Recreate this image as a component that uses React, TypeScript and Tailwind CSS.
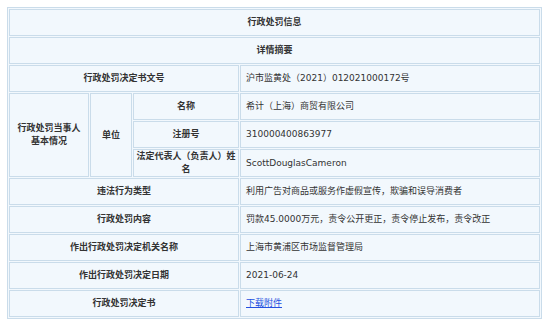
const label =
  "border border-[#cadcea] px-[5px] py-0 text-center font-semibold text-[#333]";
const value = "border border-[#cadcea] px-[5px] py-0 text-left text-[#333]";

const bottomRows: [string, React.ReactNode][] = [
  ["违法行为类型", "利用广告对商品或服务作虚假宣传，欺骗和误导消费者"],
  ["行政处罚内容", "罚款45.0000万元，责令公开更正，责令停止发布，责令改正"],
  ["作出行政处罚决定机关名称", "上海市黄浦区市场监督管理局"],
  ["作出行政处罚决定日期", "2021-06-24"],
  [
    "行政处罚决定书",
    <a href="#" className="text-[#2450e0] underline">
      下载附件
    </a>,
  ],
];

export default function App() {
  return (
    <div className="min-h-screen bg-white pl-[7px] pt-[7px] font-['DejaVu_Sans','Noto_Sans_CJK_SC',sans-serif] text-[9px] leading-[13px]">
      <table className="w-[535px] table-fixed border-separate border-spacing-[1px] border border-[#cadcea] bg-[#f2f8fd]">
        <colgroup>
          <col className="w-[80px]" />
          <col className="w-[42px]" />
          <col className="w-[106px]" />
          <col />
        </colgroup>
        <tbody>
          <tr className="h-[27px]">
            <td colSpan={4} className={label}>
              行政处罚信息
            </td>
          </tr>
          <tr className="h-[27px]">
            <td colSpan={4} className={label}>
              详情摘要
            </td>
          </tr>
          <tr className="h-[27px]">
            <td colSpan={3} className={label}>
              行政处罚决定书文号
            </td>
            <td className={value}>沪市监黄处（2021）012021000172号</td>
          </tr>
          <tr className="h-[27px]">
            <td rowSpan={3} className={label}>
              行政处罚当事人
              <br />
              基本情况
            </td>
            <td rowSpan={3} className={label}>
              单位
            </td>
            <td className={label}>名称</td>
            <td className={value}>希计（上海）商贸有限公司</td>
          </tr>
          <tr className="h-[27px]">
            <td className={label}>注册号</td>
            <td className={value}>310000400863977</td>
          </tr>
          <tr className="h-[27px]">
            <td className="border border-[#cadcea] px-[1px] py-0 text-center font-semibold text-[#333]">
              法定代表人（负责人）姓名
            </td>
            <td className={value}>ScottDouglasCameron</td>
          </tr>
          {bottomRows.map(([k, v]) => (
            <tr key={k} className="h-[27px]">
              <td colSpan={3} className={label}>
                {k}
              </td>
              <td className={value}>{v}</td>
            </tr>
          ))}
        </tbody>
      </table>
    </div>
  );
}
